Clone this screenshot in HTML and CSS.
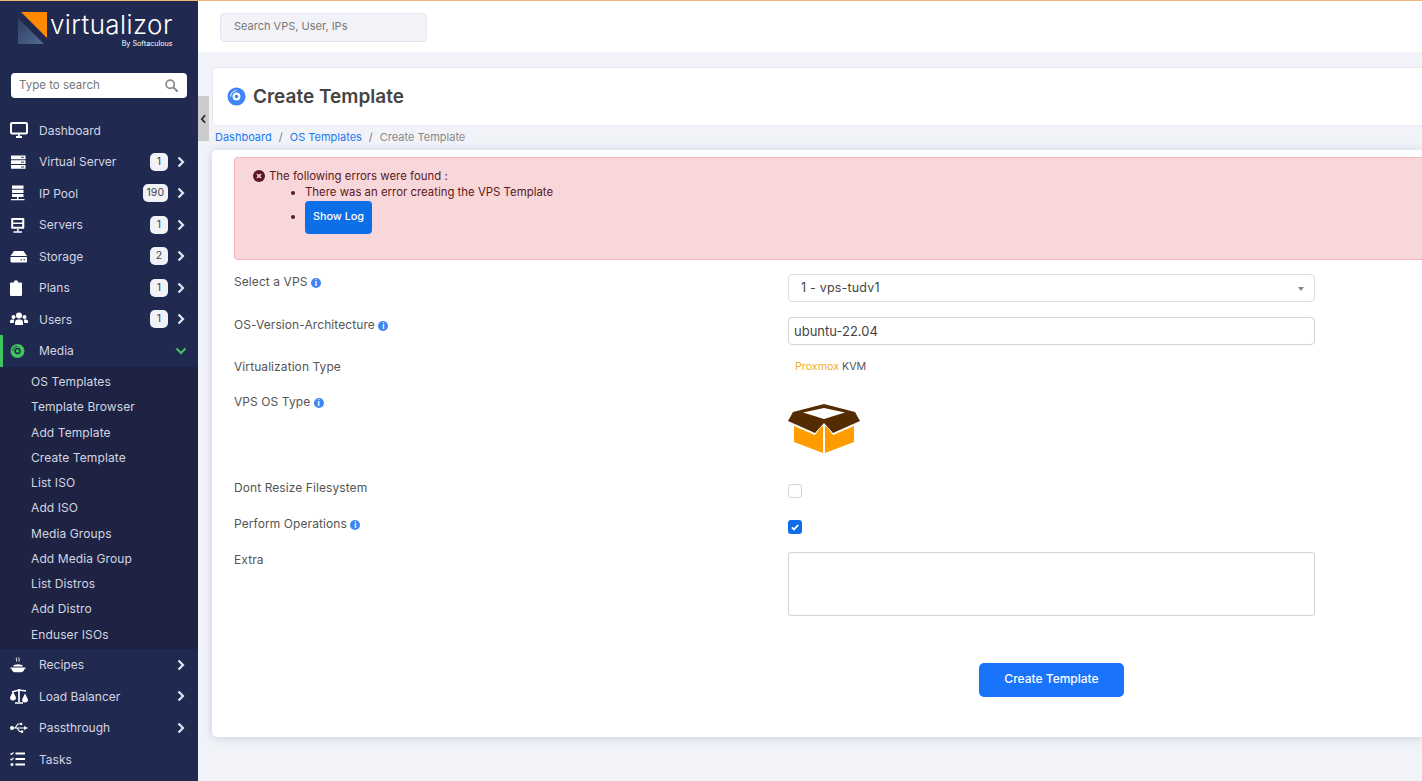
FILE: index.html
```html
<!DOCTYPE html>
<html lang="en">
<head>
    <meta charset="UTF-8">
    <meta name="viewport" content="width=device-width, initial-scale=1.0">
    <title>Create Template</title>
    <link rel="stylesheet" href="styles.css">
</head>
<body>

    <aside class="sidebar">
        <div class="logo">
            <svg class="logo-mark" viewBox="0 0 30 33" width="30" height="33">
                <defs>
                    <linearGradient id="slate" x1="0" y1="0" x2="1" y2="1">
                        <stop offset="0" stop-color="#2f3d63"/>
                        <stop offset="1" stop-color="#526a92"/>
                    </linearGradient>
                </defs>
                <polygon points="0,6 0,32 26,32" fill="url(#slate)"/>
                <polygon points="3,0 29,0 29,26" fill="#ff8a00"/>
            </svg>
            <div class="logo-text">
                <span class="logo-name">virtualizor</span>
                <span class="logo-by">By Softaculous</span>
            </div>
        </div>

        <div class="side-search">
            <span>Type to search</span>
            <svg viewBox="0 0 14 14" width="13" height="13"><circle cx="5.6" cy="5.6" r="4.4" fill="none" stroke="#8a8a8a" stroke-width="1.9"/><path d="M9 9l4 4" stroke="#8a8a8a" stroke-width="2.2" stroke-linecap="round"/></svg>
        </div>

        <nav class="menu">
            <a class="item">
                <svg class="ico" viewBox="0 0 18 16"><rect x="1" y="1" width="16" height="10.5" rx="1.2" fill="none" stroke="#fff" stroke-width="2"/><path d="M6 15h6M9 12v3" stroke="#fff" stroke-width="1.8"/></svg>
                <span class="label">Dashboard</span>
            </a>
            <a class="item">
                <svg class="ico" viewBox="0 0 18 16"><path d="M1 1.5h14.5v3.7H1zM1 6.3h14.5V10H1zM1 11.1h14.5v3.7H1z" fill="#fff"/><path d="M11 3.3h3M11 8.1h3M11 13h3" stroke="#20294f" stroke-width=".9"/></svg>
                <span class="label">Virtual Server</span>
                <span class="count">1</span>
                <svg class="arrow" viewBox="0 0 8 12"><path d="M1.500 1.500L6 6l-4.500 4.500" fill="none" stroke="#d4eef2" stroke-width="2.200"/></svg>
            </a>
            <a class="item">
                <svg class="ico" viewBox="0 0 18 16"><path d="M2 .5h11.500v3.200H2zM2 4.700h11.500v3.200H2zM2 8.900h11.500v3.200H2zM1 14h13.500v1.300H1zM7 12h1.500v3H7z" fill="#fff"/></svg>
                <span class="label">IP Pool</span>
                <span class="count">190</span>
                <svg class="arrow" viewBox="0 0 8 12"><path d="M1.500 1.500L6 6l-4.500 4.500" fill="none" stroke="#d4eef2" stroke-width="2.200"/></svg>
            </a>
            <a class="item">
                <svg class="ico" viewBox="0 0 18 16"><path d="M2 1h11.500a.8.8 0 0 1 .8.800V11a.8.8 0 0 1-.8.800H2a.8.800 0 0 1-.8-.8V1.800A.8.800 0 0 1 2 1z" fill="#fff"/><path d="M3.200 3h9v2.500h-9zM3.200 7h9v2.800h-9z" fill="#20294f"/><path d="M3.500 15h8.500M7.800 12v3" stroke="#fff" stroke-width="1.500"/></svg>
                <span class="label">Servers</span>
                <span class="count">1</span>
                <svg class="arrow" viewBox="0 0 8 12"><path d="M1.500 1.500L6 6l-4.500 4.500" fill="none" stroke="#d4eef2" stroke-width="2.200"/></svg>
            </a>
            <a class="item">
                <svg class="ico" viewBox="0 0 18 16"><path d="M4 3h9.500l3.500 5H.5z" fill="#fff"/><path d="M.5 9H17v4.500a1 1 0 0 1-1 1H1.500a1 1 0 0 1-1-1z" fill="#fff"/><path d="M10.500 11.800h1.500M13.500 11.800h1.500" stroke="#20294f" stroke-width="1"/></svg>
                <span class="label">Storage</span>
                <span class="count">2</span>
                <svg class="arrow" viewBox="0 0 8 12"><path d="M1.500 1.500L6 6l-4.500 4.500" fill="none" stroke="#d4eef2" stroke-width="2.200"/></svg>
            </a>
            <a class="item">
                <svg class="ico" viewBox="0 0 18 16"><path d="M1 2.500h2.800a2.200 2.200 0 0 1 4.400 0H11a1 1 0 0 1 1 1V15a1 1 0 0 1-1 1H1a1 1 0 0 1-1-1V3.500a1 1 0 0 1 1-1z" fill="#fff"/></svg>
                <span class="label">Plans</span>
                <span class="count">1</span>
                <svg class="arrow" viewBox="0 0 8 12"><path d="M1.500 1.500L6 6l-4.500 4.500" fill="none" stroke="#d4eef2" stroke-width="2.200"/></svg>
            </a>
            <a class="item">
                <svg class="ico" viewBox="0 0 18 14"><circle cx="9" cy="3.500" r="3" fill="#fff"/><circle cx="3.500" cy="5" r="2" fill="#fff"/><circle cx="14.500" cy="5" r="2" fill="#fff"/><path d="M5 13v-2.500A3 3 0 0 1 8 7.500h2a3 3 0 0 1 3 3V13z" fill="#fff"/><path d="M0 11V9.500A2 2 0 0 1 2 7.500h2L3.800 11zM18 11V9.500a2 2 0 0 0-2-2h-2l.2 3.500z" fill="#fff"/></svg>
                <span class="label">Users</span>
                <span class="count">1</span>
                <svg class="arrow" viewBox="0 0 8 12"><path d="M1.500 1.500L6 6l-4.500 4.500" fill="none" stroke="#d4eef2" stroke-width="2.200"/></svg>
            </a>
            <a class="item active">
                <svg class="ico" viewBox="0 0 18 16"><circle cx="7.500" cy="8" r="7" fill="#3fc45f"/><circle cx="7.500" cy="8" r="2.400" fill="none" stroke="#20294f" stroke-width="1.500"/><path d="M2.700 8A4.800 4.800 0 0 1 7.500 3.200" fill="none" stroke="#20294f" stroke-width=".8"/></svg>
                <span class="label">Media</span>
                <svg class="arrow-down" viewBox="0 0 12 8"><path d="M1.500 1.500L6 6l4.500-4.500" fill="none" stroke="#3fc45f" stroke-width="2"/></svg>
            </a>
            <div class="submenu">
                <a>OS Templates</a>
                <a>Template Browser</a>
                <a>Add Template</a>
                <a>Create Template</a>
                <a>List ISO</a>
                <a>Add ISO</a>
                <a>Media Groups</a>
                <a>Add Media Group</a>
                <a>List Distros</a>
                <a>Add Distro</a>
                <a>Enduser ISOs</a>
            </div>
            <a class="item">
                <svg class="ico" viewBox="0 0 18 16"><path d="M.5 10.500h15v1.300H14.600c-.5 1.700-1.500 3-3 3.400H4.400c-1.500-.4-2.500-1.700-3-3.400H.5z" fill="#fff"/><path d="M3 9.500c.5-3 9.500-3 10 0z" fill="#fff"/><path d="M6.500.5c-1 1.300 1 2 0 4M9 .5c-1 1.300 1 2 0 4" fill="none" stroke="#fff" stroke-width="1"/></svg>
                <span class="label">Recipes</span>
                <svg class="arrow" viewBox="0 0 8 12"><path d="M1.500 1.500L6 6l-4.500 4.500" fill="none" stroke="#d4eef2" stroke-width="2.200"/></svg>
            </a>
            <a class="item">
                <svg class="ico" viewBox="0 0 18 16"><path d="M2 4l7-2 7 1M9 1v13M5 15h8" fill="none" stroke="#fff" stroke-width="1.700"/><path d="M0 9.500l3-6 3 6a3 3 0 0 1-6 0zM12 11.500l3-6 3 6a3 3 0 0 1-6 0z" fill="#fff"/></svg>
                <span class="label">Load Balancer</span>
                <svg class="arrow" viewBox="0 0 8 12"><path d="M1.500 1.500L6 6l-4.500 4.500" fill="none" stroke="#d4eef2" stroke-width="2.200"/></svg>
            </a>
            <a class="item">
                <svg class="ico" viewBox="0 0 18 14"><circle cx="2" cy="7" r="2" fill="#fff"/><path d="M2 7h13M5 7l3-4h2M7 7l2.500 3.500H11" fill="none" stroke="#fff" stroke-width="1.200"/><path d="M14 5l4 2-4 2z" fill="#fff"/><rect x="10" y="1.800" width="2.400" height="2.400" rx="1.200" fill="#fff"/><rect x="10.800" y="9.400" width="2.400" height="2.400" fill="#fff"/></svg>
                <span class="label">Passthrough</span>
                <svg class="arrow" viewBox="0 0 8 12"><path d="M1.500 1.500L6 6l-4.500 4.500" fill="none" stroke="#d4eef2" stroke-width="2.200"/></svg>
            </a>
            <a class="item">
                <svg class="ico" viewBox="0 0 18 16"><path d="M5.500 2.500H15M5.500 8H15M5.500 13.500H15" stroke="#fff" stroke-width="2"/><path d="M.5 2.500l1 1 2-2.200" fill="none" stroke="#fff" stroke-width="1.200"/><path d="M.5 8l1 1 2-2.200" fill="none" stroke="#fff" stroke-width="1.200"/><circle cx="2" cy="13.500" r="1.500" fill="#fff"/></svg>
                <span class="label">Tasks</span>
            </a>
        </nav>
    </aside>

    <div class="collapse-tab">
        <svg viewBox="0 0 8 12" width="7" height="10"><path d="M6 1.500L2 6l4 4.500" fill="none" stroke="#2b2b2b" stroke-width="2.200"/></svg>
    </div>

    <div class="page">
        <header class="topbar">
            <div class="top-search">Search VPS, User, IPs</div>
        </header>

        <main class="content">
            <section class="title-card">
                <svg class="disc" viewBox="0 0 20 20" width="19" height="19"><circle cx="10" cy="10" r="9.500" fill="#3f85f5"/><circle cx="10" cy="10" r="3" fill="none" stroke="#fff" stroke-width="2.200"/><path d="M3.800 10A6.200 6.200 0 0 1 10 3.800" fill="none" stroke="#fff" stroke-width="1"/></svg>
                <h1>Create Template</h1>
            </section>

            <div class="crumbs">
                <a>Dashboard</a><i>/</i><a>OS Templates</a><i>/</i><span>Create Template</span>
            </div>

            <section class="form-card">
                <div class="alert">
                    <p class="alert-head">
                        <svg viewBox="0 0 12 12" width="12" height="12"><circle cx="6" cy="6" r="6" fill="#5d1722"/><path d="M4 4l4 4M8 4l-4 4" stroke="#f8d7da" stroke-width="1.600"/></svg>
                        The following errors were found :
                    </p>
                    <ul>
                        <li>There was an error creating the VPS Template</li>
                        <li><button class="log-btn">Show Log</button></li>
                    </ul>
                </div>

                <div class="row row-select">
                    <label>Select a VPS <b class="info">i</b></label>
                    <div class="select">1 - vps-tudv1<em></em></div>
                </div>
                <div class="row row-os">
                    <label>OS-Version-Architecture <b class="info">i</b></label>
                    <input class="text-input" type="text" value="ubuntu-22.04">
                </div>
                <div class="row row-virt">
                    <label>Virtualization Type</label>
                    <div class="virt"><span>Proxmox</span> KVM</div>
                </div>
                <div class="row row-type">
                    <label>VPS OS Type <b class="info">i</b></label>
                    <svg class="box" viewBox="0 0 72 50" width="72" height="50">
                        <path d="M6 22l21 9 6-8 2-1v27L6 38z" fill="#ff9d00"/>
                        <path d="M66 22l-21 9-6-8-2-1v27l29-11z" fill="#ff9d00"/>
                        <path d="M36 0l31 8 5 9-27 12-9-10-9 10L0 17l5-9z" fill="#552b04"/>
                        <path d="M36 4L57 8.500 36 15 15 8.500z" fill="#fff"/>
                    </svg>
                </div>
                <div class="row row-check">
                    <label>Dont Resize Filesystem</label>
                    <span class="check"></span>
                </div>
                <div class="row row-check">
                    <label>Perform Operations <b class="info">i</b></label>
                    <span class="check on"><svg viewBox="0 0 14 14" width="14" height="14"><path d="M3.800 7.300l2.200 2.100 4.200-4.400" fill="none" stroke="#fff" stroke-width="1.800"/></svg></span>
                </div>
                <div class="row row-extra">
                    <label>Extra</label>
                    <textarea class="extra"></textarea>
                </div>
                <div class="row row-submit">
                    <span></span>
                    <button class="submit">Create Template</button>
                </div>
            </section>
        </main>
    </div>

</body>
</html>
```

FILE: styles.css
```css
* {
    box-sizing: border-box;
}

html, body {
    height: 100%;
}

body {
    margin: 0;
    display: flex;
    overflow: hidden;
    font-family: Inter, "Noto Sans", sans-serif;
    font-size: 12px;
    color: #555;
    background-color: #f1f3f9;
    border-top: 1px solid #f0b57a;
}

/* sidebar */
.sidebar {
    width: 198px;
    flex-shrink: 0;
    background-color: #20294f;
    color: #d3d6e2;
}

.logo {
    display: flex;
    height: 57px;
    padding: 11px 0 0 18px;
}

.logo-mark {
    flex-shrink: 0;
}

.logo-text {
    display: flex;
    flex-direction: column;
    margin-left: 2px;
    color: #fff;
}

.logo-name {
    font-size: 26px;
    font-weight: 300;
    line-height: 26px;
    letter-spacing: 0.4px;
}

.logo-by {
    align-self: flex-end;
    margin-top: 1px;
    font-size: 7.200px;
    line-height: 9px;
}

.side-search {
    display: flex;
    align-items: center;
    justify-content: space-between;
    height: 25px;
    margin: 15px 11px 0;
    padding: 0 9px 0 8px;
    background-color: #fff;
    border-radius: 4px;
    color: #777;
    font-size: 11.500px;
}

.side-search span {
    padding-bottom: 2px;
}

.menu {
    margin-top: 16.500px;
}

.item {
    display: flex;
    align-items: center;
    height: 31.500px;
    padding-left: 10px;
    font-size: 12px;
}

.item.active {
    border-left: 3px solid #3fc45f;
    padding-left: 7px;
}

.ico {
    width: 18px;
    height: 16px;
    flex-shrink: 0;
}

.label {
    margin-left: 11px;
    flex: 1;
}

.count {
    min-width: 18px;
    height: 18px;
    padding: 0 4px;
    margin-right: 9px;
    background-color: #f0f2f8;
    border-radius: 5px;
    color: #444;
    font-size: 10.500px;
    line-height: 18px;
    text-align: center;
}

.arrow {
    width: 8px;
    height: 12px;
    margin-right: 13px;
}

.arrow-down {
    width: 12px;
    height: 8px;
    margin-right: 11px;
}

.submenu {
    display: flex;
    flex-direction: column;
    height: 282.500px;
    padding: 2.500px 0 2px 31px;
    background-color: #1e2343;
}

.submenu a {
    flex: 1;
    line-height: 25px;
    font-size: 12px;
    letter-spacing: 0.1px;
}

.collapse-tab {
    position: absolute;
    top: 96px;
    left: 198px;
    display: flex;
    align-items: center;
    justify-content: center;
    width: 11px;
    height: 45px;
    background-color: #ccc;
}

/* main area */
.page {
    flex: 1;
    min-width: 0;
}

.topbar {
    height: 51px;
    padding: 12px 0 0 22px;
    background-color: #fff;
}

.top-search {
    width: 207px;
    height: 29px;
    padding-left: 13px;
    background-color: #f1f3f9;
    border: 1px solid #e4e7ef;
    border-radius: 4px;
    color: #777;
    font-size: 11px;
    line-height: 25px;
}

.content {
    margin-left: 14px;
    padding-top: 15px;
}

.title-card {
    display: flex;
    align-items: center;
    height: 59px;
    padding-left: 14px;
    background-color: #fff;
    border: 1px solid #e8eaf1;
    border-right: none;
    border-radius: 5px 0 0 5px;
}

.title-card h1 {
    margin: 0 0 0 7px;
    color: #444;
    font-size: 19px;
    font-weight: 600;
}

.crumbs {
    height: 24px;
    padding-left: 3px;
    font-size: 11px;
    line-height: 23px;
}

.crumbs a {
    color: #1a78f2;
}

.crumbs i {
    margin: 0 7px;
    color: #777;
    font-style: normal;
}

.crumbs span {
    color: #888;
}

.form-card {
    height: 587px;
    padding: 7px 0 0 22px;
    background-color: #fff;
    border-radius: 5px 0 0 5px;
    box-shadow: 0 1px 10px rgba(60, 70, 110, 0.2);
}

.alert {
    height: 103px;
    padding: 11px 0 0 18px;
    background-color: #f8d7da;
    border: 1px solid #f3b8bd;
    border-right: none;
    border-radius: 4px 0 0 4px;
    color: #5d1722;
    font-size: 11.400px;
}

.alert-head {
    display: flex;
    align-items: center;
    gap: 4px;
    margin: 0;
    line-height: 14px;
}

.alert ul {
    margin: 0;
    padding-left: 52px;
}

.alert li {
    line-height: 18px;
}

.log-btn {
    height: 33px;
    padding: 0 8px 3px;
    background-color: #0d6fe8;
    border: none;
    border-radius: 4px;
    color: #fff;
    font-family: inherit;
    font-size: 10.800px;
    font-weight: 500;
}

.row {
    display: grid;
    grid-template-columns: 554px 527px;
    align-items: start;
    color: #555;
}

.row label {
    font-size: 12px;
    letter-spacing: 0.08px;
}

.info {
    display: inline-block;
    width: 10px;
    height: 10px;
    background-color: #3f85f5;
    border-radius: 50%;
    color: #fff;
    font-size: 8px;
    line-height: 10px;
    text-align: center;
}

.row-select {
    margin-top: 14px;
    height: 43px;
}

.row-select label {
    line-height: 16px;
}

.select {
    position: relative;
    height: 28px;
    padding-left: 12px;
    border: 1px solid #dcdfe6;
    border-radius: 4px;
    color: #444;
    font-size: 12.500px;
    letter-spacing: 0.2px;
    line-height: 26px;
}

.select em {
    position: absolute;
    top: 12px;
    right: 10px;
    border: 3px solid transparent;
    border-top: 4px solid #888;
}

.row-os {
    height: 42px;
}

.text-input {
    height: 28px;
    padding: 0 5px 1px;
    border: 1px solid #cfd3da;
    border-radius: 4px;
    color: #444;
    font-family: inherit;
    font-size: 13px;
    outline: none;
}

.row-virt {
    height: 35px;
}

.virt {
    padding: 1px 0 0 7px;
    color: #555;
    font-size: 10.700px;
}

.virt span {
    color: #f0ad1e;
}

.row-type {
    height: 86px;
}

.box {
    margin-top: 10px;
}

.row-check {
    height: 36px;
}

.check {
    display: block;
    width: 14px;
    height: 14px;
    margin-top: 4px;
    border: 1px solid #cfd3da;
    border-radius: 3px;
}

.check.on {
    background-color: #0d6fe8;
    border: none;
}

.check svg {
    display: block;
}

.extra {
    height: 64px;
    border: 1px solid #cfd3da;
    border-radius: 3px;
    resize: none;
}

.row-submit {
    margin-top: 47px;
}

.submit {
    justify-self: center;
    width: 145px;
    height: 34px;
    padding-bottom: 4px;
    background-color: #1a74fb;
    border: none;
    border-radius: 5px;
    color: #fff;
    font-family: inherit;
    font-size: 12px;
    font-weight: 500;
}
```
